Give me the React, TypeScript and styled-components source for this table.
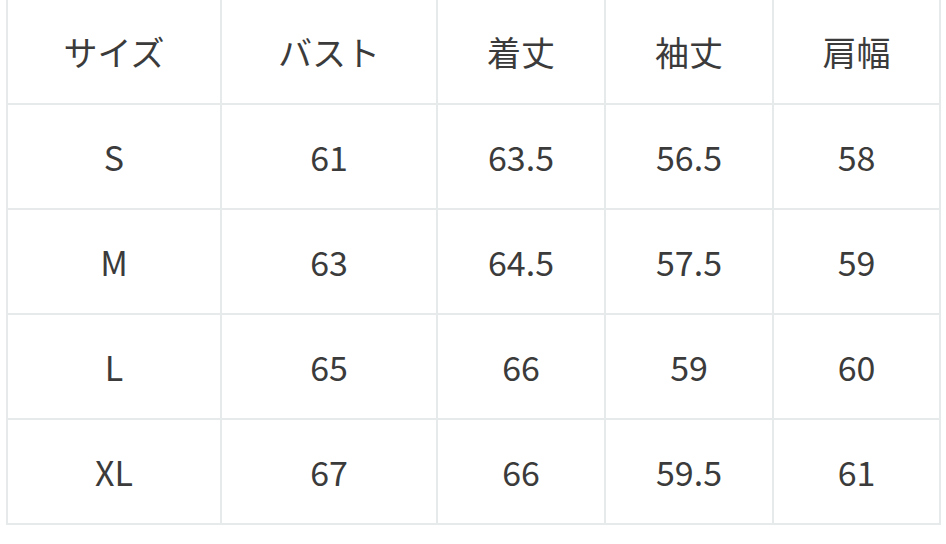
import React from 'react';
import styled, { createGlobalStyle } from 'styled-components';

const GlobalStyle = createGlobalStyle`
  html, body {
    margin: 0;
    padding: 0;
    background: #ffffff;
  }
  body {
    font-family: "Noto Sans CJK JP", "Noto Sans", sans-serif;
  }
`;

const headers = ['サイズ', 'バスト', '着丈', '袖丈', '肩幅'];

const rows = [
  ['S', '61', '63.5', '56.5', '58'],
  ['M', '63', '64.5', '57.5', '59'],
  ['L', '65', '66', '59', '60'],
  ['XL', '67', '66', '59.5', '61'],
];

export default function App() {
  return (
    <>
      <GlobalStyle />
      <Page>
        <SizeTable>
          {headers.map((h) => (
            <Cell key={h}>{h}</Cell>
          ))}
          {rows.map((row) =>
            row.map((v, i) => <Cell key={row[0] + i}>{v}</Cell>)
          )}
        </SizeTable>
      </Page>
    </>
  );
}

const Page = styled.div`
  width: 946px;
  height: 544px;
  overflow: hidden;
  background: #ffffff;
`;

const SizeTable = styled.div`
  display: grid;
  grid-template-columns: 212px 214px 166px 166px 165px;
  grid-auto-rows: 103px;
  gap: 2px;
  padding: 2px;
  margin: -2px 0 0 6px;
  width: fit-content;
  background: #e6eaea;
`;

const Cell = styled.div`
  display: flex;
  align-items: center;
  justify-content: center;
  background: #ffffff;
  color: #3b3b3b;
  font-size: 34px;
  font-weight: 400;
`;
